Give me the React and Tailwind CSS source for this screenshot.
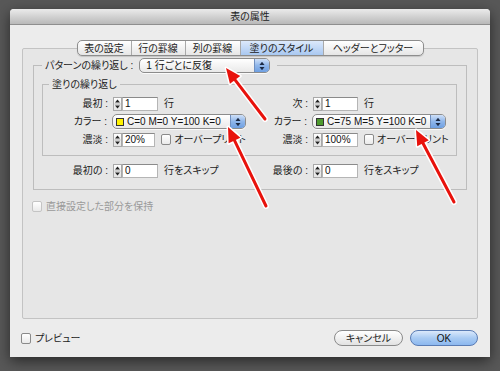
import React from 'react'

const FONT = "font-['Liberation_Sans','Noto_Sans_CJK_JP',sans-serif] [font-feature-settings:'palt']"

const Stepper = () => (
  <div className="w-[9px] h-[14px] shrink-0 bg-gradient-to-b from-white to-[#e4e4e4] border border-[#a8a8a8] flex flex-col items-center justify-center">
    <svg width="7" height="12" viewBox="0 0 7 12">
      <path d="M3.5 1.5 L6 4.5 H1 Z" fill="#222" />
      <line x1="0.5" y1="6" x2="6.5" y2="6" stroke="#9a9a9a" strokeWidth="0.8" />
      <path d="M3.5 10.5 L6 7.5 H1 Z" fill="#222" />
    </svg>
  </div>
)

const NumField = ({ value }) => (
  <div className="w-[36px] h-[14px] bg-white border border-[#b5b5b5] border-t-[#8a8a8a] text-[10px] leading-[12px] pl-[2px] text-[#111]">
    {value}
  </div>
)

const Caps = () => (
  <div className="w-[15px] h-full shrink-0 bg-gradient-to-b from-[#cfe0f8] via-[#8fb6ea] to-[#6e9fe2] border-l border-[#6f8fbf] flex items-center justify-center">
    <svg width="6" height="10" viewBox="0 0 6 10">
      <path d="M3 0.8 L5.5 4 H0.5 Z" fill="#1c2a44" />
      <path d="M3 9.2 L5.5 6 H0.5 Z" fill="#1c2a44" />
    </svg>
  </div>
)

const Popup = ({ width, swatch, children }) => (
  <div
    className={`${width} h-[15px] rounded-[5px] border border-[#8c8c8c] bg-gradient-to-b from-white to-[#e9e9e9] overflow-hidden flex items-center shadow-[0_1px_0_rgba(255,255,255,0.8)]`}
  >
    {swatch && <div className={`w-[8px] h-[8px] ml-[3px] border border-[#333] ${swatch}`} />}
    <div className={`flex-1 ${swatch ? 'pl-[3px]' : 'pl-[6px]'} text-[10px] leading-[13px] text-[#111] whitespace-nowrap`}>{children}</div>
    <Caps />
  </div>
)

const Check = ({ disabled }) => (
  <div
    className={`w-[10px] h-[11px] shrink-0 rounded-[2px] border bg-gradient-to-b from-white to-[#eaeaea] ${
      disabled ? 'border-[#c4c4c4]' : 'border-[#8a8a8a]'
    }`}
  />
)

const Label = ({ w, children }) => (
  <div className={`${w} shrink-0 text-right pr-[5px] text-[10px] text-[#222] whitespace-pre`}>{children} :</div>
)

const Arrow = ({ x1, y1, x2, y2 }) => {
  // x1,y1 = tip ; x2,y2 = tail
  const dx = x1 - x2
  const dy = y1 - y2
  const len = Math.hypot(dx, dy)
  const ux = dx / len
  const uy = dy / len
  const hl = 15
  const hw = 6.5
  const bx = x1 - ux * hl
  const by = y1 - uy * hl
  const head = `${x1},${y1} ${bx - uy * hw},${by + ux * hw} ${bx + uy * hw},${by - ux * hw}`
  return (
    <g>
      <line x1={bx + ux * 2} y1={by + uy * 2} x2={x2} y2={y2} stroke="#fff" strokeWidth="6" strokeLinecap="round" />
      <polygon points={head} fill="#fff" stroke="#fff" strokeWidth="3" strokeLinejoin="round" />
      <line x1={bx + ux * 2} y1={by + uy * 2} x2={x2} y2={y2} stroke="#e8120c" strokeWidth="3" strokeLinecap="round" />
      <polygon points={head} fill="#e8120c" />
    </g>
  )
}

const tabs = ['表の設定', '行の罫線', '列の罫線', '塗りのスタイル', 'ヘッダーとフッター']

export default function App() {
  return (
    <div className={`relative w-[500px] h-[371px] overflow-hidden bg-[#585858] pt-[9px] pl-[10px] ${FONT}`}>
      <div className="w-[480px] h-[348px] bg-[#ececec] rounded-t-[4px] shadow-[0_4px_14px_rgba(0,0,0,0.55)] flex flex-col">
        {/* title bar */}
        <div className="h-[16px] rounded-t-[4px] bg-gradient-to-b from-[#ebebeb] to-[#b9b9b9] border-b border-[#8e8e8e] flex items-center justify-center text-[10px] text-[#222]">
          表の属性
        </div>

        {/* tabs + panel */}
        <div className="px-[12px] pt-[15px] flex flex-col">
          <div className="relative z-10 self-center flex h-[16px] -mb-[8px] rounded-[5px] border border-[#8d8d8d] overflow-hidden bg-gradient-to-b from-white to-[#e6e6e6] shadow-[0_1px_1px_rgba(0,0,0,0.15)]">
            {tabs.map((t, i) => (
              <div
                key={t}
                className={`flex items-center justify-center text-[10px] text-[#222] ${
                  i > 0 ? 'border-l border-[#a9a9a9]' : ''
                } ${i === 3 ? 'bg-gradient-to-b from-[#dce9fb] to-[#a9c8f1]' : ''} ${
                  ['w-[53px]', 'w-[54px]', 'w-[55px]', 'w-[83px]', 'w-[100px]'][i]
                }`}
              >
                {t}
              </div>
            ))}
          </div>

          <div className="h-[271px] border border-[#c3c3c3] bg-[#e6e6e6] rounded-[2px] pt-[9px] px-[10px] flex flex-col">
            {/* outer group */}
            <fieldset className="border border-[#bdbdbd] pb-[11px]">
              <legend className="ml-[8px] px-[3px] flex items-center">
                <span className="text-[10px] text-[#222] mr-[6px] whitespace-pre">パターンの繰り返し :</span>
                <Popup width="w-[131px]">1 行ごとに反復</Popup>
                <span className="w-[4px]" />
              </legend>

              <fieldset className="mt-[5px] ml-[8px] mr-[9px] border border-[#bdbdbd] pt-[5px] pb-[8px] flex">
                <legend className="ml-[6px] px-[3px] text-[10px] leading-[13px] text-[#222]">塗りの繰り返し</legend>
                <div className="w-[203px] flex flex-col gap-[3px]">
                  <div className="h-[15px] flex items-center">
                    <Label w="w-[70px]">最初</Label>
                    <Stepper />
                    <NumField value="1" />
                    <span className="ml-[6px] text-[10px] text-[#222]">行</span>
                  </div>
                  <div className="h-[15px] flex items-center">
                    <Label w="w-[69px]">カラー</Label>
                    <Popup width="w-[134px]" swatch="bg-[#fff200]">C=0 M=0 Y=100 K=0</Popup>
                  </div>
                  <div className="h-[15px] flex items-center">
                    <Label w="w-[70px]">濃淡</Label>
                    <Stepper />
                    <NumField value="20%" />
                    <div className="ml-[6px]"><Check /></div>
                    <span className="ml-[3px] text-[10px] text-[#222] whitespace-nowrap">オーバープリント</span>
                  </div>
                </div>
                <div className="flex flex-col gap-[3px]">
                  <div className="h-[15px] flex items-center">
                    <Label w="w-[67px]">次</Label>
                    <Stepper />
                    <NumField value="1" />
                    <span className="ml-[6px] text-[10px] text-[#222]">行</span>
                  </div>
                  <div className="h-[15px] flex items-center">
                    <Label w="w-[66px]">カラー</Label>
                    <Popup width="w-[134px]" swatch="bg-[#4e9a2e]">C=75 M=5 Y=100 K=0</Popup>
                  </div>
                  <div className="h-[15px] flex items-center">
                    <Label w="w-[67px]">濃淡</Label>
                    <Stepper />
                    <NumField value="100%" />
                    <div className="ml-[6px]"><Check /></div>
                    <span className="ml-[3px] text-[10px] text-[#222] whitespace-nowrap">オーバープリント</span>
                  </div>
                </div>
              </fieldset>

              <div className="mt-[7px] ml-[9px] flex">
                <div className="w-[203px] h-[15px] flex items-center">
                  <Label w="w-[70px]">最初の</Label>
                  <Stepper />
                  <NumField value="0" />
                  <span className="ml-[6px] text-[10px] text-[#222]">行をスキップ</span>
                </div>
                <div className="h-[15px] flex items-center">
                  <Label w="w-[67px]">最後の</Label>
                  <Stepper />
                  <NumField value="0" />
                  <span className="ml-[6px] text-[10px] text-[#222]">行をスキップ</span>
                </div>
              </div>
            </fieldset>

            <div className="mt-[9px] -ml-[1px] flex items-center gap-[4px]">
              <Check disabled />
              <span className="text-[10px] text-[#9a9a9a]">直接設定した部分を保持</span>
            </div>
          </div>
        </div>

        {/* footer */}
        <div className="mt-[11px] px-[11px] flex items-center">
          <Check />
          <span className="ml-[4px] text-[10px] text-[#222]">プレビュー</span>
          <div className="ml-auto flex gap-[7px] mr-[1px]">
            <div className="w-[69px] h-[16px] rounded-full border border-[#8a8a8a] bg-gradient-to-b from-white to-[#e2e2e2] flex items-center justify-center text-[10px] text-[#222]">
              キャンセル
            </div>
            <div className="w-[68px] h-[16px] rounded-full border border-[#5a7cb4] bg-gradient-to-b from-[#dbe9fb] via-[#a9cbf3] to-[#8cb8ef] flex items-center justify-center text-[10px] text-[#111]">
              OK
            </div>
          </div>
        </div>
      </div>

      {/* annotation arrows */}
      <svg className="absolute inset-0 pointer-events-none" width="500" height="371" viewBox="0 0 500 371">
        <Arrow x1={226} y1={68} x2={265} y2={119} />
        <Arrow x1={228} y1={127} x2={266} y2={206} />
        <Arrow x1={416} y1={130} x2={454} y2={202} />
      </svg>
    </div>
  )
}
